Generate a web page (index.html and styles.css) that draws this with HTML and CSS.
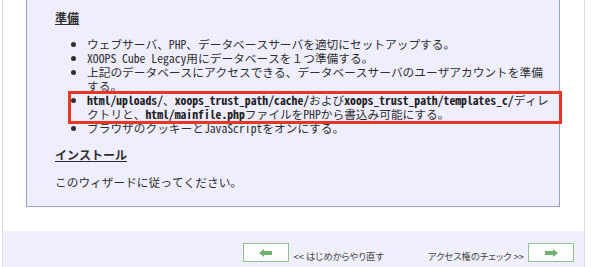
FILE: index.html
```html
<!DOCTYPE html>
<html lang="ja">
<head>
    <meta charset="UTF-8">
    <title>XOOPS Cube Legacy インストール</title>
    <link rel="stylesheet" href="styles.css">
</head>
<body>

<div class="wizard">
    <div class="main">
        <div class="box">
            <h2 class="title">準備</h2>
            <ul class="steps">
                <li>ウェブサーバ、PHP、データベースサーバを適切にセットアップする。</li>
                <li>XOOPS Cube Legacy用にデータベースを１つ準備する。</li>
                <li>上記のデータベースにアクセスできる、データベースサーバのユーザアカウントを準備する。</li>
                <li class="marked"><b>html/uploads/</b>、<b>xoops_trust_path/cache/</b>および<b>xoops_trust_path/templates_c/</b>ディレクトリと、<b>html/mainfile.php</b>ファイルをPHPから書込み可能にする。<span class="mark"></span></li>
                <li>ブラウザのクッキーとJavaScriptをオンにする。</li>
            </ul>
            <h2 class="title">インストール</h2>
            <p class="text">このウィザードに従ってください。</p>
        </div>
    </div>

    <div class="nav">
        <div class="nav-item">
            <button type="button" class="btn">
                <svg width="14" height="8" viewBox="0 0 14 8"><path d="M0 4 L5 0 L5 2 L13 2 L13 6 L5 6 L5 8 Z" fill="#6db36d"/></svg>
            </button>
            <span class="nav-label">&lt;&lt; はじめからやり直す</span>
        </div>
        <div class="nav-item">
            <span class="nav-label">アクセス権のチェック &gt;&gt;</span>
            <button type="button" class="btn">
                <svg width="14" height="8" viewBox="0 0 14 8"><path d="M14 4 L9 0 L9 2 L1 2 L1 6 L9 6 L9 8 Z" fill="#6db36d"/></svg>
            </button>
        </div>
    </div>
</div>

</body>
</html>
```

FILE: styles.css
```css
body {
    margin: 0;
    background-color: #fff;
    color: #2e2e2e;
    font-family: "Noto Sans Mono CJK JP", "Noto Sans CJK JP", monospace;
    font-size: 11.7px;
    line-height: 14px;
}

.wizard {
    width: 581px;
    margin-left: 2px;
    border-left: 1px solid #ddd;
    border-right: 1px solid #ddd;
}

.main {
    padding: 0 24px 24px 23px;
}

.box {
    background-color: #eeeeff;
    border: 1px solid #95a3cc;
    border-top: none;
    padding: 11px 5px 17px 28px;
}

.title {
    margin: 0;
    font-size: 12px;
    font-weight: bold;
    text-decoration: underline;
}

.steps {
    margin: 12px 0 13px 0;
    padding-left: 32px;
}

.marked {
    position: relative;
}

.marked b {
    font-weight: bold;
    color: #222;
}

/* red annotation frame over the fourth item */
.mark {
    position: absolute;
    top: -2px;
    left: -19px;
    right: -8px;
    bottom: -3px;
    border: 3px solid #ea3522;
}

.text {
    margin: 13px 0 0 0;
}

.nav {
    background-color: #f0f0fd;
    display: flex;
    justify-content: flex-end;
    gap: 44px;
    padding: 13px 10px 8px 0;
    height: 18px;
}

.nav-item {
    display: flex;
    align-items: flex-end;
    gap: 4px;
}

.nav-label {
    font-family: "Noto Sans CJK JP", sans-serif;
    font-feature-settings: "palt";
    font-size: 9.3px;
    line-height: 12px;
    color: #444;
}

.btn {
    width: 46px;
    height: 19px;
    padding: 0;
    background-color: #fff;
    border: 1px solid #93c093;
    display: flex;
    align-items: center;
    justify-content: center;
}
```
